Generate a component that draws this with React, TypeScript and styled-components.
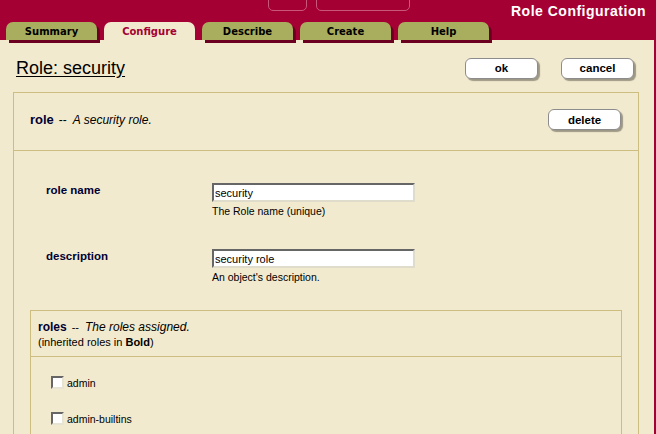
import React from 'react'
import styled, { createGlobalStyle } from 'styled-components'

const crimson = '#a50034'
const cream = '#f2eace'
const tan = '#cdbd7e'
const navy = '#000033'

const GlobalStyle = createGlobalStyle`
  html, body {
    margin: 0;
    padding: 0;
    background: ${crimson};
    overflow: hidden;
  }
  body {
    font-family: "Liberation Sans", Arial, sans-serif;
    font-size: 11px;
    color: #000;
  }
`

const Page = styled.div`
  width: 656px;
  height: 434px;
  overflow: hidden;
  background: ${crimson};
`

const Header = styled.div`
  position: relative;
  height: 40px;
  display: flex;
  flex-direction: column;
  justify-content: space-between;
`

const Decor = styled.div<{ $left: number; $width: number }>`
  position: absolute;
  top: -8px;
  left: ${({ $left }) => $left}px;
  width: ${({ $width }) => $width}px;
  height: 17px;
  border: 1px solid #c9577a;
  border-radius: 5px;
`

const AppTitle = styled.div`
  align-self: flex-end;
  margin: 3px 10px 0 0;
  color: #fff;
  font-weight: bold;
  font-size: 14px;
  letter-spacing: 0.5px;
  line-height: 16px;
`

const TabRow = styled.div`
  display: flex;
  gap: 7px;
  padding-left: 6px;
`

const Tab = styled.div<{ $active?: boolean }>`
  width: 91px;
  height: 18px;
  border-radius: 7px 7px 0 0;
  background: ${({ $active }) => ($active ? cream : '#a8ae5e')};
  color: ${({ $active }) => ($active ? crimson : '#000')};
  box-shadow: ${({ $active }) => ($active ? 'none' : '3px 3px 0 #6c0021')};
  font-family: "DejaVu Sans", Verdana, sans-serif;
  font-weight: bold;
  font-size: 10px;
  line-height: 20px;
  text-align: center;
`

const Content = styled.div`
  margin-right: 2px;
  background: ${cream};
  height: 394px;
  padding: 0 15px 0 13px;
`

const TitleRow = styled.div`
  display: flex;
  align-items: center;
  height: 52px;
`

const PageTitle = styled.h1`
  margin: 4px 0 0 3px;
  font-size: 18px;
  font-weight: normal;
  text-decoration: underline;
  text-underline-offset: 2px;
  line-height: 22px;
  flex: 1;
`

const ButtonGroup = styled.div`
  display: flex;
  gap: 23px;
  margin: 4px 5px 0 0;
`

const Button = styled.button`
  width: 73px;
  height: 21px;
  background: #fff;
  border: 1px solid #8c8c8c;
  border-radius: 6px;
  box-shadow: 2px 2px 1px rgba(0, 0, 0, 0.35);
  font-family: "Liberation Sans", Arial, sans-serif;
  font-weight: bold;
  font-size: 11.5px;
  color: #000;
  padding: 0;
`

const Panel = styled.div`
  border: 1px solid ${tan};
  border-bottom: none;
  height: 400px;
`

const PanelHeader = styled.div`
  display: flex;
  align-items: center;
  justify-content: space-between;
  height: 53px;
  padding: 0 17px 4px 16px;
  border-bottom: 1px solid ${tan};
`

const Caption = styled.div`
  font-size: 12px;
`

const Name = styled.b<{ $size: number }>`
  color: ${navy};
  font-size: ${({ $size }) => $size}px;
  margin-right: 5px;
`

const Dash = styled.span`
  margin-right: 6px;
`

const Desc = styled.i`
  font-size: 12px;
`

const PanelBody = styled.div`
  padding: 32px 16px 0;
`

const FormRow = styled.div`
  display: grid;
  grid-template-columns: 166px 1fr;
  padding-left: 16px;
  margin-bottom: 31px;
`

const Label = styled.div`
  color: ${navy};
  font-weight: bold;
  font-size: 11.5px;
  line-height: 14px;
`

const Field = styled.div`
  display: flex;
  flex-direction: column;
  gap: 2px;
`

const TextInput = styled.input`
  box-sizing: border-box;
  width: 203px;
  height: 19px;
  border: 2px solid;
  border-color: #666 #e0dccb #e0dccb #666;
  background: #fff;
  padding: 0 1px;
  font-family: "Liberation Sans", Arial, sans-serif;
  font-size: 11px;
  outline: none;
`

const Help = styled.div`
  font-size: 10.5px;
  line-height: 14px;
`

const SubPanel = styled.div`
  border: 1px solid ${tan};
  margin-top: -5px;
  height: 200px;
`

const SubHeader = styled.div`
  padding: 8px 7px 7px;
  border-bottom: 1px solid ${tan};
`

const SubLine = styled.div<{ $lh: number }>`
  line-height: ${({ $lh }) => $lh}px;
`

const CheckList = styled.div`
  display: flex;
  flex-direction: column;
  gap: 23px;
  padding: 19px 20px;
`

const CheckRow = styled.label`
  display: flex;
  align-items: flex-end;
  gap: 3px;
  font-size: 10.5px;
  line-height: 11px;
`

const Box = styled.span`
  box-sizing: border-box;
  width: 13px;
  height: 13px;
  background: #fff;
  border: 2px solid;
  border-color: #666 #e8e4d4 #e8e4d4 #666;
`

const tabs = ['Summary', 'Configure', 'Describe', 'Create', 'Help']
const roles = ['admin', 'admin-builtins']

export default function App() {
  return (
    <Page>
      <GlobalStyle />
      <Header>
        <Decor $left={268} $width={37} />
        <Decor $left={316} $width={92} />
        <AppTitle>Role Configuration</AppTitle>
        <TabRow>
          {tabs.map((t) => (
            <Tab key={t} $active={t === 'Configure'}>
              {t}
            </Tab>
          ))}
        </TabRow>
      </Header>
      <Content>
        <TitleRow>
          <PageTitle>Role: security</PageTitle>
          <ButtonGroup>
            <Button>ok</Button>
            <Button>cancel</Button>
          </ButtonGroup>
        </TitleRow>
        <Panel>
          <PanelHeader>
            <Caption>
              <Name $size={13}>role</Name>
              <Dash>--</Dash>
              <Desc>A security role.</Desc>
            </Caption>
            <Button>delete</Button>
          </PanelHeader>
          <PanelBody>
            <FormRow>
              <Label>role name</Label>
              <Field>
                <TextInput defaultValue="security" />
                <Help>The Role name (unique)</Help>
              </Field>
            </FormRow>
            <FormRow>
              <Label>description</Label>
              <Field>
                <TextInput defaultValue="security role" />
                <Help>An object's description.</Help>
              </Field>
            </FormRow>
            <SubPanel>
              <SubHeader>
                <SubLine $lh={16}>
                  <Name $size={12}>roles</Name>
                  <Dash>--</Dash>
                  <Desc>The roles assigned.</Desc>
                </SubLine>
                <SubLine $lh={14}>
                  (inherited roles in <b>Bold</b>)
                </SubLine>
              </SubHeader>
              <CheckList>
                {roles.map((r) => (
                  <CheckRow key={r}>
                    <Box />
                    {r}
                  </CheckRow>
                ))}
              </CheckList>
            </SubPanel>
          </PanelBody>
        </Panel>
      </Content>
    </Page>
  )
}
